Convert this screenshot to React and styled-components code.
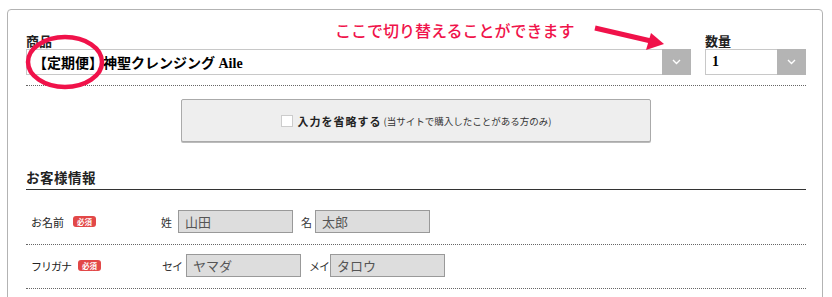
import React from 'react';
import styled, { createGlobalStyle } from 'styled-components';

const GlobalStyle = createGlobalStyle`
  body {
    margin: 0;
    background: #fff;
    font-family: "Noto Sans CJK JP", "Liberation Sans", sans-serif;
    color: #333;
  }
`;

const Panel = styled.div`
  position: relative;
  box-sizing: border-box;
  width: 816px;
  min-height: 320px;
  margin: 9px 0 0 7px;
  padding: 22px 16px 0 18px;
  border: 1px solid #b3b3b3;
  border-radius: 4px;
`;

const TopRow = styled.div`
  display: flex;
  gap: 14px;
  padding-bottom: 10px;
  border-bottom: 1px dotted #666;
`;

const Field = styled.div`
  display: flex;
  flex-direction: column;
  width: ${p => p.width}px;
`;

const FieldLabel = styled.div`
  font-size: 13px;
  font-weight: bold;
  line-height: 17px;
  height: 17px;
  color: #222;
`;

const Select = styled.div`
  display: flex;
  box-sizing: border-box;
  height: 26px;
  border: 1px solid #c8c8c8;
  border-right: none;
`;

const SelectValue = styled.div`
  flex: 1;
  display: flex;
  align-items: center;
  padding-left: 6px;
  font-family: "Liberation Serif", "Noto Sans CJK JP", serif;
  font-size: 14px;
  font-weight: bold;
  color: #000;
  white-space: nowrap;
`;

const SelectArrow = styled.div`
  width: 29px;
  margin: -1px 0;
  background: #b4b4b4;
  display: flex;
  align-items: center;
  justify-content: center;
`;

const SkipWrap = styled.div`
  display: flex;
  justify-content: center;
  padding-top: 13px;
`;

const SkipButton = styled.div`
  box-sizing: border-box;
  width: 470px;
  height: 43px;
  background: #eee;
  border: 1px solid #aaa;
  border-radius: 2px;
  box-shadow: 0 1px 0 #bbb;
  display: flex;
  align-items: center;
  justify-content: center;
`;

const CheckBox = styled.span`
  box-sizing: border-box;
  width: 12px;
  height: 12px;
  background: #fff;
  border: 1px solid #ccc;
  margin-right: 5px;
`;

const SkipMain = styled.span`
  font-size: 11px;
  font-weight: bold;
  letter-spacing: 1px;
  color: #222;
`;

const SkipNote = styled.span`
  font-size: 9.5px;
  color: #333;
  margin-left: 2px;
`;

const Heading = styled.h3`
  margin: 26px 0 11px;
  padding-bottom: 2px;
  font-size: 13.5px;
  font-weight: bold;
  line-height: 19px;
  letter-spacing: 0.5px;
  color: #222;
  border-bottom: 1.5px solid #333;
`;

const Row = styled.div`
  display: flex;
  align-items: center;
  padding: 9px 0 11px;
  border-bottom: 1px dotted #666;
`;

const RowLabel = styled.div`
  display: flex;
  align-items: center;
  box-sizing: border-box;
  width: 135px;
  padding-left: 5px;
  font-size: 11px;
  color: #222;
  letter-spacing: ${p => p.spacing || 0}px;
`;

const Badge = styled.span`
  margin-left: ${p => p.offset}px;
  width: 23px;
  height: 11px;
  border-radius: 3px;
  background: #e24848;
  color: #fff;
  font-size: 7.5px;
  font-weight: bold;
  line-height: 11px;
  text-align: center;
  letter-spacing: 0;
`;

const NamePart = styled.span`
  font-size: 11px;
  letter-spacing: -1px;
  color: #333;
  margin: 0 ${p => p.gap}px 0 ${p => p.lead}px;
`;

const TextInput = styled.div`
  box-sizing: border-box;
  width: 115px;
  height: 23px;
  background: #ddd;
  border: 1px solid #999;
  padding-left: 6px;
  font-size: 13px;
  line-height: 21px;
  color: #555;
`;

const Note = styled.span`
  position: absolute;
  left: 327px;
  top: 8px;
  font-size: 16px;
  font-weight: 500;
  color: #f0124a;
  white-space: nowrap;
`;

const Overlay = styled.svg`
  position: absolute;
  left: 0;
  top: 0;
  width: 816px;
  height: 120px;
  pointer-events: none;
`;

const Chevron = () => (
  <svg width="9" height="6" viewBox="0 0 9 6">
    <polyline points="1,1 4.5,4.5 8,1" fill="none" stroke="#fff" strokeWidth="1.4" />
  </svg>
);

function App() {
  return (
    <>
      <GlobalStyle />
      <Panel>
        <TopRow>
          <Field width={665}>
            <FieldLabel>商品</FieldLabel>
            <Select>
              <SelectValue>【定期便】神聖クレンジング Aile</SelectValue>
              <SelectArrow><Chevron /></SelectArrow>
            </Select>
          </Field>
          <Field width={101}>
            <FieldLabel>数量</FieldLabel>
            <Select>
              <SelectValue>1</SelectValue>
              <SelectArrow><Chevron /></SelectArrow>
            </Select>
          </Field>
        </TopRow>

        <SkipWrap>
          <SkipButton>
            <CheckBox />
            <SkipMain>入力を省略する</SkipMain>
            <SkipNote>(当サイトで購入したことがある方のみ)</SkipNote>
          </SkipButton>
        </SkipWrap>

        <Heading>お客様情報</Heading>

        <Row>
          <RowLabel>お名前<Badge offset={9}>必須</Badge></RowLabel>
          <NamePart lead={0} gap={7}>姓</NamePart>
          <TextInput>山田</TextInput>
          <NamePart lead={8} gap={4}>名</NamePart>
          <TextInput>太郎</TextInput>
        </Row>
        <Row>
          <RowLabel spacing={-1}>フリガナ<Badge offset={7}>必須</Badge></RowLabel>
          <NamePart lead={1} gap={4}>セイ</NamePart>
          <TextInput>ヤマダ</TextInput>
          <NamePart lead={8} gap={1}>メイ</NamePart>
          <TextInput>タロウ</TextInput>
        </Row>

        <Note>ここで切り替えることができます</Note>
        <Overlay viewBox="0 0 816 120">
          <ellipse cx="57" cy="52" rx="37" ry="25" fill="none" stroke="#f0124a" strokeWidth="4.5" />
          <line x1="587" y1="18" x2="643" y2="31" stroke="#f0124a" strokeWidth="5" />
          <polygon points="656,34 638,40 643,23" fill="#f0124a" />
        </Overlay>
      </Panel>
    </>
  );
}

export default App;
